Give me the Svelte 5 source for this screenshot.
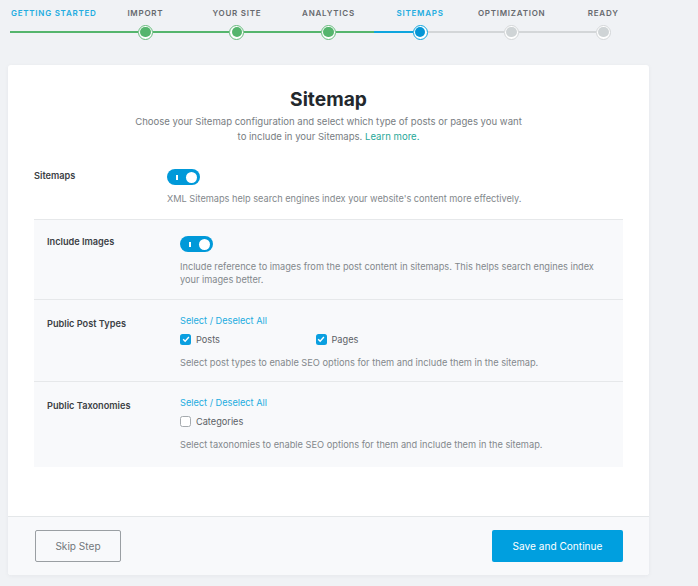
<script>
  const steps = [
    { label: 'Getting Started', state: 'start' },
    { label: 'Import', state: 'done' },
    { label: 'Your Site', state: 'done' },
    { label: 'Analytics', state: 'done' },
    { label: 'Sitemaps', state: 'current' },
    { label: 'Optimization', state: 'todo' },
    { label: 'Ready', state: 'todo' }
  ];
</script>

<div class="page">
  <div class="stepper">
    {#each steps as step, i}
      <div class="step {step.state}">
        <div class="step-label">{step.label}</div>
        <div class="track">
          {#if step.state === 'start'}
            <span class="seg green"></span>
          {:else}
            <span class="seg" class:green={step.state === 'done'} class:blue={step.state === 'current'}></span>
            <span class="dot"><span class="dot-inner"></span></span>
            <span class="seg" class:green={step.state === 'done'} class:none={i === steps.length - 1}></span>
          {/if}
        </div>
      </div>
    {/each}
  </div>

  <div class="card">
    <div class="intro">
      <h1>Sitemap</h1>
      <p>Choose your Sitemap configuration and select which type of posts or pages you want<br />to include in your Sitemaps. <a href="#learn">Learn more.</a></p>
    </div>

    <div class="settings">
      <div class="row top">
        <div class="name">Sitemaps</div>
        <div class="field">
          <span class="toggle"><span class="bar"></span><span class="knob"></span></span>
          <p class="desc toggle-desc">XML Sitemaps help search engines index your website's content more effectively.</p>
        </div>
      </div>

      <div class="row sub images">
        <div class="name">Include Images</div>
        <div class="field">
          <span class="toggle"><span class="bar"></span><span class="knob"></span></span>
          <p class="desc toggle-desc">Include reference to images from the post content in sitemaps. This helps search engines index your images better.</p>
        </div>
      </div>

      <div class="row sub types">
        <div class="name">Public Post Types</div>
        <div class="field">
          <a class="select-all" href="#all">Select / Deselect All</a>
          <div class="checks">
            <label class="check">
              <span class="box on"><svg viewBox="0 0 12 12" width="10" height="10"><path d="M2.6 6.2 5 8.6 9.5 3.6" fill="none" stroke="#fff" stroke-width="1.7" /></svg></span>
              Posts
            </label>
            <label class="check">
              <span class="box on"><svg viewBox="0 0 12 12" width="10" height="10"><path d="M2.6 6.2 5 8.6 9.5 3.6" fill="none" stroke="#fff" stroke-width="1.7" /></svg></span>
              Pages
            </label>
          </div>
          <p class="desc">Select post types to enable SEO options for them and include them in the sitemap.</p>
        </div>
      </div>

      <div class="row sub taxonomies">
        <div class="name">Public Taxonomies</div>
        <div class="field">
          <a class="select-all" href="#all">Select / Deselect All</a>
          <div class="checks">
            <label class="check"><span class="box"></span>Categories</label>
          </div>
          <p class="desc">Select taxonomies to enable SEO options for them and include them in the sitemap.</p>
        </div>
      </div>
    </div>

    <div class="footer">
      <button class="skip">Skip Step</button>
      <button class="save">Save and Continue</button>
    </div>
  </div>
</div>

<style>
  :global(body) {
    margin: 0;
    background: #f0f2f5;
    font-family: Inter, "Liberation Sans", sans-serif;
  }

  .page {
    width: 698px;
    height: 586px;
    padding: 0 49px 0 8px;
    box-sizing: border-box;
    overflow: hidden;
  }

  /* progress bar */
  .stepper {
    display: grid;
    grid-template-columns: repeat(7, 1fr);
    height: 65px;
    padding-top: 8px;
    box-sizing: border-box;
  }

  .step-label {
    height: 16px;
    line-height: 10px;
    font-size: 8px;
    font-weight: 600;
    letter-spacing: 0.75px;
    text-align: center;
    text-transform: uppercase;
    white-space: nowrap;
    color: #66696e;
  }

  .start .step-label,
  .current .step-label {
    color: #22ace0;
  }

  .track {
    display: flex;
    align-items: center;
    height: 16px;
  }

  .start .track {
    margin-left: 2px;
  }

  .seg {
    flex: 1;
    height: 1.6px;
    background: #d3d6d8;
  }

  .seg.green {
    background: #55b56d;
  }

  .seg.blue {
    background: #0ea5de;
  }

  .seg.none {
    background: transparent;
  }

  .dot {
    width: 15px;
    height: 15px;
    box-sizing: border-box;
    border-radius: 50%;
    padding: 1.2px;
    border: 1px solid #d3d6d8;
    background: #fff;
  }

  .done .dot {
    border-color: #66bb7c;
  }

  .current .dot {
    border-color: #0ea5de;
    border-width: 1.4px;
  }

  .dot-inner {
    display: block;
    width: 100%;
    height: 100%;
    border-radius: 50%;
    background: #cfd4d6;
  }

  .done .dot-inner {
    background: #55b56d;
  }

  .current .dot-inner {
    background: #0596d6;
  }

  /* card */
  .card {
    background: #fff;
    height: 510px;
    border-radius: 3px;
    box-shadow: 0 1px 4px rgba(30, 40, 60, 0.05);
    display: flex;
    flex-direction: column;
    overflow: hidden;
  }

  .intro {
    height: 103px;
    padding-top: 23px;
    box-sizing: border-box;
    text-align: center;
  }

  h1 {
    margin: 0;
    font-size: 19.2px;
    line-height: 22px;
    font-weight: 700;
    color: #23282d;
  }

  .intro p {
    margin: 4px 0 0;
    font-size: 9.55px;
    line-height: 15px;
    color: #787d82;
  }

  .intro a {
    color: #27a899;
    text-decoration: none;
  }

  .settings {
    flex: 1;
    padding: 0 26px;
  }

  .row {
    display: flex;
    box-sizing: border-box;
  }

  .top {
    height: 52px;
    padding-top: 1px;
    border-bottom: 1px solid #e6e8ea;
  }

  .top .name {
    padding-top: 1px;
  }

  .sub {
    background: #f8f9fb;
    padding-left: 13px;
  }

  .images {
    height: 80px;
    padding-top: 16px;
    border-bottom: 1px solid #e6e8ea;
  }

  .types {
    height: 82px;
    padding-top: 15px;
    border-bottom: 1px solid #e6e8ea;
  }

  .taxonomies {
    height: 85px;
    padding-top: 15px;
  }

  .name {
    width: 133px;
    flex: none;
    font-size: 9.2px;
    line-height: 12px;
    font-weight: 600;
    color: #3c4145;
  }

  .types .name,
  .taxonomies .name {
    padding-top: 3px;
  }

  .field {
    flex: 1;
    padding-right: 8px;
  }

  .toggle {
    display: flex;
    align-items: center;
    justify-content: space-between;
    width: 33px;
    height: 16px;
    padding: 0 3px 0 9px;
    box-sizing: border-box;
    border-radius: 8px;
    background: #0099d9;
  }

  .bar {
    width: 1.5px;
    height: 5px;
    background: #fff;
  }

  .knob {
    width: 11px;
    height: 11px;
    border-radius: 50%;
    background: #fff;
  }

  .desc {
    margin: 0;
    font-size: 9.24px;
    line-height: 13px;
    color: #83888c;
  }

  .toggle-desc {
    margin-top: 7px;
    font-size: 9.2px;
  }

  .images .toggle-desc {
    margin-top: 9px;
    line-height: 12.6px;
  }

  .select-all {
    display: block;
    font-size: 9.2px;
    line-height: 12px;
    color: #22ace0;
    text-decoration: none;
  }

  .checks {
    display: flex;
    margin: 6px 0 11px;
    height: 12px;
  }

  .check {
    display: flex;
    align-items: center;
    gap: 5px;
    width: 135.5px;
    font-size: 9.2px;
    color: #5c6166;
  }

  .box {
    display: flex;
    align-items: center;
    justify-content: center;
    width: 11px;
    height: 11px;
    box-sizing: border-box;
    border: 1px solid #a5aaae;
    border-radius: 2.5px;
    background: #fff;
  }

  .box.on {
    border: none;
    background: #0a9fe0;
  }

  /* footer */
  .footer {
    height: 59px;
    padding: 13px 26px 0 27px;
    box-sizing: border-box;
    display: flex;
    justify-content: space-between;
    align-items: flex-start;
    background: #f8f9fb;
    border-top: 1px solid #e4e7e9;
  }

  button {
    height: 32px;
    border-radius: 2px;
    font-family: inherit;
    font-size: 10.1px;
    cursor: pointer;
  }

  .skip {
    width: 86px;
    border: 1px solid #9a9fa3;
    background: #f8f9fb;
    color: #72777c;
  }

  .save {
    width: 131px;
    border: none;
    background: #009fdf;
    color: #fff;
  }
</style>
